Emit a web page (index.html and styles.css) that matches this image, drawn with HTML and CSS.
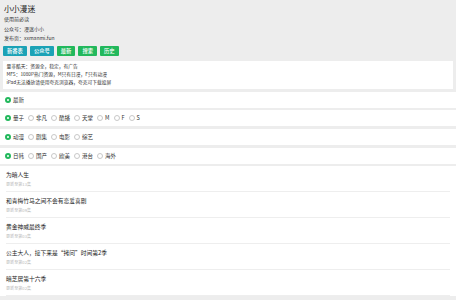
FILE: index.html
```html
<!DOCTYPE html>
<html lang="zh">
<head>
<meta charset="utf-8">
<link rel="stylesheet" href="styles.css">
</head>
<body>
<header class="head">
  <div class="title">小小漫迷</div>
  <div class="info">使用前必读</div>
  <div class="info">公众号：漫迷小小</div>
  <div class="info">发布页：xxmanmi.fun</div>
  <div class="btns">
    <span class="btn teal">新番表</span>
    <span class="btn teal">公众号</span>
    <span class="btn green">最新</span>
    <span class="btn green">搜索</span>
    <span class="btn green">历史</span>
  </div>
</header>
<div class="notice">
  <div>量非酷天：资源全，稳定，有广告</div>
  <div>MFS：1080P热门资源，M只有日漫，F只有动漫</div>
  <div>iPad无法播放请使用夸克浏览器，夸克可下载投屏</div>
</div>
<div class="row">
  <span class="radio on"></span><span class="lbl">最新</span>
</div>
<div class="row">
  <span class="radio on"></span><span class="lbl">量子</span>
  <span class="radio"></span><span class="lbl">非凡</span>
  <span class="radio"></span><span class="lbl">酷播</span>
  <span class="radio"></span><span class="lbl">天堂</span>
  <span class="radio"></span><span class="lbl">M</span>
  <span class="radio"></span><span class="lbl">F</span>
  <span class="radio"></span><span class="lbl">S</span>
</div>
<div class="row">
  <span class="radio on"></span><span class="lbl">动漫</span>
  <span class="radio"></span><span class="lbl">剧集</span>
  <span class="radio"></span><span class="lbl">电影</span>
  <span class="radio"></span><span class="lbl">综艺</span>
</div>
<div class="row">
  <span class="radio on"></span><span class="lbl">日韩</span>
  <span class="radio"></span><span class="lbl">国产</span>
  <span class="radio"></span><span class="lbl">欧美</span>
  <span class="radio"></span><span class="lbl">港台</span>
  <span class="radio"></span><span class="lbl">海外</span>
</div>
<ul class="list">
  <li class="item"><div class="name">为暗人生</div><div class="sub">更新至第13集</div></li>
  <li class="item"><div class="name">和青梅竹马之间不会有恋爱喜剧</div><div class="sub">更新至第09集</div></li>
  <li class="item"><div class="name">黄金神威最终季</div><div class="sub">更新至第03集</div></li>
  <li class="item"><div class="name">公主大人，接下来是“拷问”时间第2季</div><div class="sub">更新至第02集</div></li>
  <li class="item"><div class="name">暗芝居第十六季</div><div class="sub">更新至第02集</div></li>
</ul>
</body>
</html>
```
FILE: styles.css
```css
* { box-sizing: border-box; }
html, body { margin: 0; padding: 0; }
body {
  background: #ededed;
  font-family: "Noto Sans CJK SC", "Noto Sans", sans-serif;
  color: #333;
}
.head { padding: 3px 0 0 0; }
.title {
  font-size: 7.8px;
  line-height: 11px;
  padding-left: 4px;
  color: #222;
}
.info {
  font-size: 5px;
  line-height: 9.5px;
  padding-left: 4px;
  color: #333;
}
.btns {
  display: flex;
  gap: 3px;
  margin: 3px 0 0 3px;
}
.btn {
  display: inline-flex;
  align-items: center;
  height: 10px;
  padding: 0 4px;
  font-size: 5.3px;
  font-weight: 500;
  color: #fff;
  border-radius: 1px;
}
.teal { background: #1ba2b6; }
.green { background: #22b85c; }
.notice {
  margin: 5px 3px 0 3px;
  background: #fff;
  padding: 1.5px 3.5px 3px;
  font-size: 4.75px;
  line-height: 8px;
  color: #333;
}
.row {
  display: flex;
  align-items: center;
  height: 16px;
  margin-top: 2.7px;
  background: #fff;
  padding-left: 5px;
}
.radio {
  width: 6px;
  height: 6px;
  border-radius: 50%;
  border: 0.6px solid #c8c8c8;
  background: #fff;
  margin-right: 2px;
  flex: none;
}
.radio.on { border: 2px solid #22b85c; }
.lbl {
  font-size: 5.5px;
  margin-right: 4px;
  color: #333;
}
.list {
  list-style: none;
  margin: 2.7px 0 0 0;
  padding: 0 6px;
  background: #fff;
}
.item {
  height: 26px;
  padding-top: 5px;
  border-bottom: 0.6px solid #eee;
}
.name {
  font-size: 5.75px;
  line-height: 7px;
  color: #222;
}
.sub {
  font-size: 4.1px;
  line-height: 6.5px;
  margin-top: 3px;
  color: #bbb;
}
```
